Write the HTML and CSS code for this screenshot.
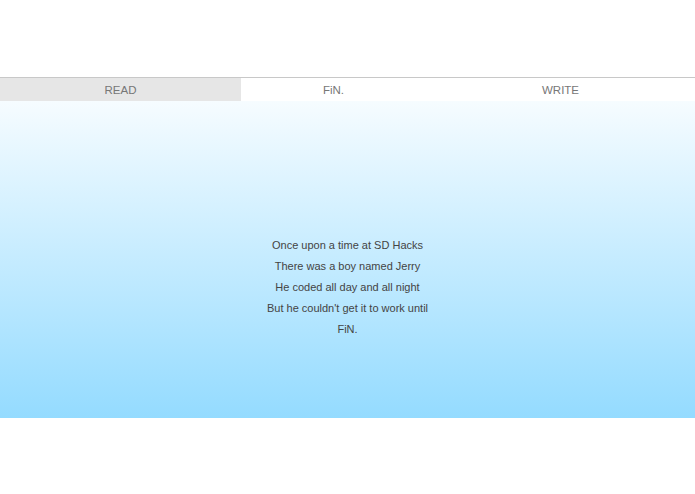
FILE: index.html
```html
<!DOCTYPE html>
<html>
<head>
<meta charset="utf-8">
<link rel="stylesheet" href="styles.css">
</head>
<body>
<div class="top"></div>
<nav class="tabs">
  <div class="tab tab-read active">READ</div>
  <div class="tab tab-fin">FiN.</div>
  <div class="tab tab-write">WRITE</div>
</nav>
<main class="story">
  <div class="lines">
    <p>Once upon a time at SD Hacks</p>
    <p>There was a boy named Jerry</p>
    <p>He coded all day and all night</p>
    <p>But he couldn't get it to work until</p>
    <p>FiN.</p>
  </div>
</main>
</body>
</html>
```
FILE: styles.css
```css
html, body {
  margin: 0;
  padding: 0;
  background: #ffffff;
  font-family: "Liberation Sans", Arial, sans-serif;
}
.top {
  height: 77px;
}
.tabs {
  display: flex;
  height: 23px;
  border-top: 1px solid #c8c8c8;
}
.tab {
  display: flex;
  align-items: center;
  justify-content: center;
  font-size: 11.5px;
  color: #777777;
  background: #ffffff;
}
.tab-read { width: 241px; }
.tab-fin { width: 185px; }
.tab-write { flex: 1; }
.tab.active {
  background: #e6e6e6;
}
.story {
  height: 317px;
  background: linear-gradient(to bottom, #f6fcff 0%, #94dbff 100%);
  box-sizing: border-box;
  padding-top: 134px;
}
.lines {
  text-align: center;
  font-size: 11px;
  color: #444444;
}
.lines p {
  margin: 0;
  line-height: 21px;
}
```
